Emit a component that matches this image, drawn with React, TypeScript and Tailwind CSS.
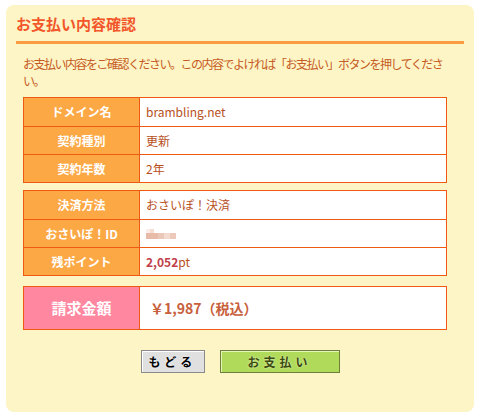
export default function App() {
  const font = { fontFamily: '"Noto Sans CJK JP", "Noto Sans", sans-serif' };

  const rows1 = [
    { label: 'ドメイン名', value: <span>brambling.net</span> },
    { label: '契約種別', value: <span>更新</span> },
    { label: '契約年数', value: <span>2年</span> },
  ];

  const rows2 = [
    { label: '決済方法', value: <span>おさいぽ！決済</span> },
    {
      label: 'おさいぽ！ID',
      value: (
        <div className="flex flex-col">
          <div className="flex">
            <div className="w-[4px] h-[4px] bg-[#fbeee8]" />
            <div className="w-[4px] h-[4px] bg-[#f6ddd3]" />
          </div>
          <div className="flex">
            <div className="w-[12px] h-[6px] bg-[#e7bba8]" />
            <div className="w-[6px] h-[6px] bg-[#ebc7b8]" />
            <div className="w-[6px] h-[6px] bg-[#f2dacf]" />
            <div className="w-[6px] h-[6px] bg-[#ecc9bb]" />
          </div>
        </div>
      ),
    },
    {
      label: '残ポイント',
      value: (
        <span>
          <span className="font-bold text-[#c2404a]">2,052</span>pt
        </span>
      ),
    },
  ];

  function Table({ rows }: { rows: { label: string; value: React.ReactNode }[] }) {
    return (
      <div className="w-[424px] border border-[#ee5a12] bg-white">
        {rows.map((r, i) => (
          <div
            key={r.label}
            className={`flex h-[28px] ${i > 0 ? 'border-t border-[#ee5a12]' : ''}`}
          >
            <div className="w-[116px] shrink-0 border-r border-[#ee5a12] bg-[#fca845] flex items-center justify-center text-white font-bold text-[12px]">
              {r.label}
            </div>
            <div className="flex-1 flex items-center pl-[6px] text-[12px] text-[#b8501c]">
              {r.value}
            </div>
          </div>
        ))}
      </div>
    );
  }

  return (
    <div style={font} className="w-[481px] h-[417px] bg-white pt-[5px] pl-[6px]">
      <div className="w-[468px] h-[407px] rounded-[8px] bg-[#fdf5c5] px-[10px] pt-[9px]">
        <div className="text-[15px] leading-[20px] font-bold text-[#f2562a] pb-[7px] border-b-[3px] border-[#fa9c42]">
          お支払い内容確認
        </div>
        <div className="px-[7px]">
          <p className="mt-[11px] text-[12px] leading-[17px] text-[#c65a24] tracking-[-1.5px] whitespace-nowrap">
            お支払い内容をご確認ください。この内容でよければ「お支払い」ボタンを押してくださ
            <br />
            い。
          </p>
          <div className="mt-[8px]">
            <Table rows={rows1} />
          </div>
          <div className="mt-[7px]">
            <Table rows={rows2} />
          </div>
          <div className="mt-[10px] w-[424px] h-[44px] border border-[#ee5a12] bg-white flex">
            <div className="w-[116px] shrink-0 border-r border-[#ee5a12] bg-[#ff87a0] flex items-center justify-center text-white font-bold text-[15px]">
              請求金額
            </div>
            <div className="flex-1 flex items-center pl-[10px] text-[14px] font-bold text-[#c8603c]">
              ￥1,987（税込）
            </div>
          </div>
        </div>
        <div className="mt-[20px] flex justify-center gap-[15px]">
          <button className="w-[64px] h-[23px] bg-[#e0e0e0] border border-[#8a8a8a] shadow-[inset_1px_1px_0_#ffffff] text-[12px] tracking-[4px] text-black font-bold [text-shadow:0_0_2px_#ffffff]">
            もどる
          </button>
          <button className="w-[120px] h-[23px] bg-[#b0da5a] border border-[#6e7f3a] shadow-[inset_1px_1px_0_#e4f5b8] text-[12px] tracking-[4px] text-[#3c4a10] font-bold [text-shadow:0_0_2px_#eefad0]">
            お支払い
          </button>
        </div>
      </div>
    </div>
  );
}
